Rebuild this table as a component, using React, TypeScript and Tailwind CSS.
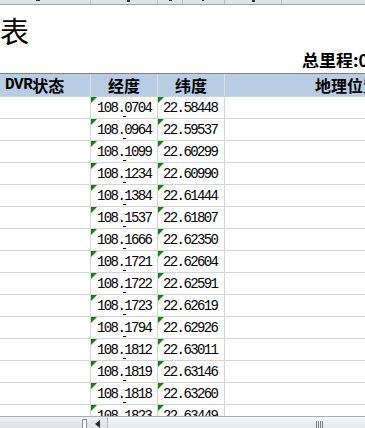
import React from "react";

const rows: [string, string][] = [
  ["108.0704", "22.58448"],
  ["108.0964", "22.59537"],
  ["108.1099", "22.60299"],
  ["108.1234", "22.60990"],
  ["108.1384", "22.61444"],
  ["108.1537", "22.61807"],
  ["108.1666", "22.62350"],
  ["108.1721", "22.62604"],
  ["108.1722", "22.62591"],
  ["108.1723", "22.62619"],
  ["108.1794", "22.62926"],
  ["108.1812", "22.63011"],
  ["108.1819", "22.63146"],
  ["108.1818", "22.63260"],
  ["108.1823", "22.63449"],
];

const cjk = { fontFamily: '"Noto Sans CJK SC", sans-serif' };
const mono = { fontFamily: '"Liberation Mono", monospace' };

function Tri() {
  return (
    <span className="absolute left-0 top-0 h-0 w-0 border-t-[6px] border-r-[6px] border-t-[#118011] border-r-transparent" />
  );
}

export default function App() {
  return (
    <div className="flex h-[428px] w-[365px] flex-col overflow-hidden bg-white text-black">
      {/* top strip */}
      <div className="flex h-[5px] shrink-0 border-b border-[#9fa5ad] bg-[#dfe2e7]">
        <div className="relative w-[91px] border-r border-[#b9bec5]">
          <span className="absolute left-[36px] top-0 h-[1px] w-[4px] bg-[#333]" />
        </div>
        <div className="relative w-[67px] border-r border-[#b9bec5]">
          <span className="absolute left-[36px] top-0 h-[2px] w-[3px] bg-[#333]" />
        </div>
        <div className="relative w-[25px] border-r border-[#b9bec5]">
          <span className="absolute left-[11px] top-0 h-[1px] w-[3px] bg-[#333]" />
        </div>
        <div className="relative w-[42px] border-r border-[#b9bec5]">
          <span className="absolute left-[19px] top-0 h-[1px] w-[2px] bg-[#333]" />
        </div>
        <div className="relative w-[57px] border-r border-[#b9bec5]">
          <span className="absolute left-[27px] top-0 h-[2px] w-[3px] bg-[#333]" />
        </div>
        <div className="flex-1" />
      </div>

      {/* title area */}
      <div className="h-[68px] shrink-0" style={cjk}>
        <div className="pt-[11px] text-[29px] leading-[29px]">表</div>
        <div className="mt-[6px] overflow-hidden whitespace-nowrap pl-[302px] text-[17px] font-bold leading-[17px]">
          总里程:0公里
        </div>
      </div>

      {/* header */}
      <div className="flex h-[24px] shrink-0 border-t border-b border-t-[#808080] border-b-[#c9d3df] bg-[#b8cce4] text-[16px] font-bold" style={cjk}>
        <div className="flex w-[91px] items-center border-r border-[#d6dde6] pl-[5px]">
          <span className="tracking-[-0.5px]" style={mono}>DVR</span>
          <span>状态</span>
        </div>
        <div className="flex w-[67px] items-center justify-center border-r border-[#d6dde6]">经度</div>
        <div className="flex w-[67px] items-center justify-center border-r border-[#d6dde6]">纬度</div>
        <div className="flex flex-1 items-center overflow-hidden whitespace-nowrap pl-[90px]">地理位置</div>
      </div>

      {/* body */}
      <div className="min-h-0 flex-1 overflow-hidden">
        {rows.map(([lng, lat], i) => (
          <div key={i} className="flex h-[22px] border-b border-[#d4d4d4] text-[14px] leading-[16px] tracking-[-1.6px]" style={mono}>
            <div className="w-[91px] border-r border-[#d4d4d4]" />
            <div className="relative w-[67px] border-r border-[#d4d4d4] pl-[6px] pt-[3px]">
              <Tri />
              {lng}
              {i < rows.length - 1 && (
                <span className="absolute bottom-[1px] left-[32px] h-[1px] w-[3px] bg-black" />
              )}
            </div>
            <div className="relative w-[67px] border-r border-[#d4d4d4] pl-[5px] pt-[3px]">
              <Tri />
              {lat}
            </div>
            <div className="flex-1" />
          </div>
        ))}
      </div>

      {/* horizontal scrollbar */}
      <div className="flex h-[12px] shrink-0 border-t border-[#a7aeb6] bg-gradient-to-b from-[#eef1f5] to-[#dde2e8]">
        <div className="w-[82px]" />
        <div className="mt-[2px] h-[10px] w-[5px] border border-[#8a9098] bg-white" />
        <div className="w-[8px]" />
        <div className="mt-[3px] h-0 w-0 border-y-[4px] border-r-[5px] border-y-transparent border-r-[#2b2b2b]" />
        <div className="w-[7px]" />
        <div className="w-[1px] bg-[#b3b9c0]" />
        <div className="flex flex-1 bg-gradient-to-b from-[#f6f8fa] to-[#e3e8ee] pl-[208px] pt-[4px]">
          <div className="flex h-[7px] gap-[1px]">
            <span className="w-[1px] bg-[#7a7f86]" />
            <span className="w-[1px] bg-[#7a7f86]" />
            <span className="w-[1px] bg-[#7a7f86]" />
            <span className="w-[1px] bg-[#7a7f86]" />
          </div>
        </div>
      </div>
    </div>
  );
}
